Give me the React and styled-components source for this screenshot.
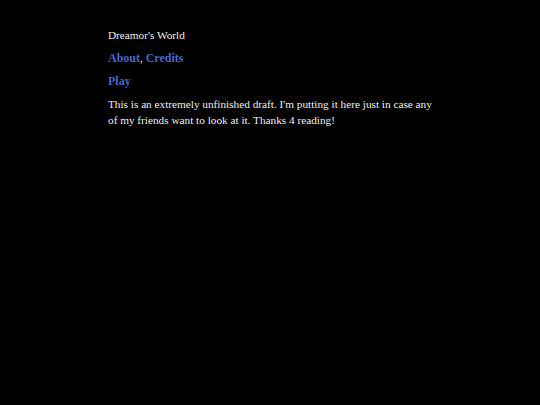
import React from "react";
import styled, { createGlobalStyle } from "styled-components";

const Global = createGlobalStyle`
  html, body { margin: 0; padding: 0; background: #000; }
  body { font-family: "Liberation Serif", "DejaVu Serif", serif; }
`;

const Page = styled.div`
  min-height: 405px;
  background: #000;
  padding: 27px 0 0 108px;
  box-sizing: border-box;
`;

const Passage = styled.div`
  width: 330px;
  font-size: 11.25px;
  line-height: 16px;
  color: #eee;
`;

const Para = styled.p`
  margin: 0 0 7px 0;
`;

const Link = styled.a`
  color: #4466cc;
  font-weight: bold;
  font-size: 12px;
  text-decoration: none;
`;

export default function App() {
  return (
    <>
      <Global />
      <Page>
        <Passage>
          <Para>Dreamor's World</Para>
          <Para>
            <Link href="#">About</Link>, <Link href="#">Credits</Link>
          </Para>
          <Para>
            <Link href="#">Play</Link>
          </Para>
          <Para>
            This is an extremely unfinished draft. I'm putting it here just in case any of my friends want to look at it. Thanks 4 reading!
          </Para>
        </Passage>
      </Page>
    </>
  );
}
